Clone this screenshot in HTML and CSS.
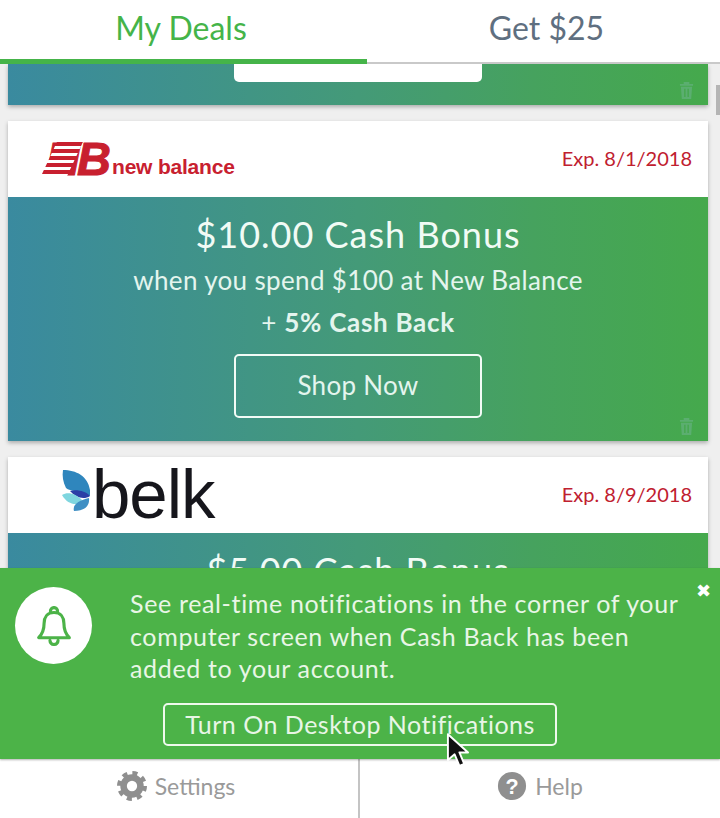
FILE: index.html
```html
<!DOCTYPE html>
<html lang="en">
<head>
    <meta charset="UTF-8">
    <title>My Deals</title>
    <link rel="stylesheet" href="styles.css">
</head>
<body>
    <!-- Tabs -->
    <nav class="tabs">
        <div class="tab active">My Deals</div>
        <div class="tab">Get $25</div>
    </nav>

    <main class="deals">
        <section class="card card-stub">
            <div class="card-body stub-body">
                <div class="stub-button"></div>
                <svg class="trash" viewBox="0 0 16 20"><path d="M1 3h14v2H1zM5 1h6v2H5zM2 6h12l-1 13H3zM5.500 8v9h1.500V8zM9 8v9h1.500V8z" fill-rule="evenodd"/></svg>
            </div>
        </section>

        <section class="card">
            <header class="card-head">
                <div class="logo-nb">
                    <span class="nb-mark">NB</span>
                    <span class="nb-stripes"></span>
                    <span class="nb-name">new balance</span>
                </div>
                <span class="expires">Exp. 8/1/2018</span>
            </header>
            <div class="card-body">
                <h2>$10.00 Cash Bonus</h2>
                <p>when you spend $100 at New Balance</p>
                <p class="plus">+ <b>5% Cash Back</b></p>
                <a class="shop-btn">Shop Now</a>
                <svg class="trash" viewBox="0 0 16 20"><path d="M1 3h14v2H1zM5 1h6v2H5zM2 6h12l-1 13H3zM5.500 8v9h1.500V8zM9 8v9h1.500V8z" fill-rule="evenodd"/></svg>
            </div>
        </section>

        <section class="card">
            <header class="card-head">
                <div class="logo-belk">
                    <svg class="belk-wing" viewBox="0 0 28 42">
                        <path d="M1 0C14 0 26 6 28 20v6C18 20 8 22 4 18 1 12 0 6 1 0z" fill="#2f86bd"/>
                        <path d="M8 21c6-2 16 0 20 5-6 4-14 2-20-5z" fill="#2b3fa6"/>
                        <path d="M0 25c6-4 14-1 20 5-2 6-14 6-20-5z" fill="#7fd6df"/>
                        <path d="M12 41c-2-7 6-11 15-13 1 8-5 13-15 13z" fill="#3f8fc4"/>
                    </svg>
                    <span class="belk-name">belk</span>
                </div>
                <span class="expires">Exp. 8/9/2018</span>
            </header>
            <div class="card-body">
                <h2>$5.00 Cash Bonus</h2>
            </div>
        </section>

        <div class="scrollbar"></div>
    </main>

    <!-- Notifications prompt -->
    <section class="promo">
        <div class="bell-circle">
            <svg viewBox="0 0 40 44" fill="none" stroke="#4cb348" stroke-width="3.500" stroke-linejoin="round" stroke-linecap="round">
                <path d="M20 7c-7.500 0-11 5.500-11 12 0 8-2 12-6 16h34c-4-4-6-8-6-16 0-6.500-3.500-12-11-12z"/>
                <path d="M16 5.500a4 4 0 0 1 8 0"/>
                <path d="M15.500 38a4.500 4.500 0 0 0 9 0"/>
            </svg>
        </div>
        <div class="promo-main">
            <p class="promo-text">See real-time notifications in the corner of your computer screen when Cash Back has been added to your account.</p>
            <a class="promo-btn">Turn On Desktop Notifications</a>
        </div>
        <span class="close">&#10006;</span>
        <svg class="cursor" viewBox="0 0 24 36">
            <path d="M2 1v27l7-6 5 12 5-2-5-12h9z" fill="#111" stroke="#fff" stroke-width="2" stroke-linejoin="round"/>
        </svg>
    </section>

    <footer class="bottom">
        <div class="bottom-item">
            <svg viewBox="0 0 32 32" fill="none" stroke="#8f8f8f">
                <circle cx="16" cy="16" r="9" stroke-width="7"/>
                <circle cx="16" cy="16" r="13.500" stroke-width="5" stroke-dasharray="5.300 5.300"/>
            </svg>
            <span>Settings</span>
        </div>
        <div class="bottom-item">
            <svg viewBox="0 0 32 32"><circle cx="16" cy="16" r="15" fill="#8f8f8f"/><text class="help-mark" x="16" y="24" text-anchor="middle">?</text></svg>
            <span>Help</span>
        </div>
    </footer>
</body>
</html>
```

FILE: styles.css
```css
* {
    box-sizing: border-box;
}

html, body {
    margin: 0;
    height: 100%;
}

body {
    font-family: 'Lato', 'Open Sans', sans-serif;
    display: flex;
    flex-direction: column;
    height: 818px;
    overflow: hidden;
    background: #efefef;
    color: #fff;
}

/* Tabs */
.tabs {
    display: flex;
    height: 64px;
    flex: none;
    background: #fff;
    border-bottom: 2px solid #c9c9c9;
}

.tab {
    flex: none;
    width: 353px;
    height: 62px;
    padding-left: 6px;
    text-align: center;
    font-size: 32px;
    line-height: 55px;
    color: #5f6f80;
}

.tab.active {
    width: 367px;
    height: 64px;
    padding: 0 5px 0 0;
    color: #45b449;
    border-bottom: 5px solid #45b449;
}

/* Cards */
.deals {
    flex: 1;
    min-height: 0;
    overflow: hidden;
    position: relative;
    padding: 0 12px 0 8px;
    display: flex;
    flex-direction: column;
    gap: 16px;
}

.card {
    flex: none;
    background: #fff;
    box-shadow: 0 2px 4px rgba(0, 0, 0, 0.28);
}

.card-head {
    height: 76px;
    display: flex;
    align-items: center;
    justify-content: space-between;
    padding: 0 16px 0 34px;
}

.expires {
    font-size: 20px;
    color: #c0202f;
    margin-top: -2px;
}

.card-body {
    position: relative;
    height: 244px;
    padding-top: 13px;
    text-align: center;
    background: linear-gradient(to right, #3a8a9f, #449a78 50%, #46a25e 75%, #45a94c);
}

.card-body h2 {
    margin: 0;
    font-size: 36px;
    font-weight: 400;
    line-height: 48px;
    letter-spacing: 1px;
    color: #f1fbf5;
}

.card-body p {
    margin: 0;
    padding-top: 2px;
    font-size: 26px;
    line-height: 40px;
    letter-spacing: 0.35px;
    color: #e4f5ee;
}

.card-body .plus {
    letter-spacing: 0.7px;
}

.shop-btn {
    display: block;
    width: 248px;
    height: 64px;
    margin: 12px auto 0;
    border: 2px solid #f2fbf6;
    border-radius: 5px;
    font-size: 26px;
    line-height: 58px;
    letter-spacing: 0.3px;
    color: #e4f5ee;
}

.trash {
    position: absolute;
    right: 14px;
    bottom: 5px;
    width: 15px;
    height: 19px;
    fill: #5bae70;
}

/* First card is scrolled almost out of view */
.card-stub .stub-body {
    height: 41px;
    padding: 0;
}

.stub-button {
    width: 248px;
    height: 18px;
    margin: 0 auto;
    background: #fff;
    border-radius: 0 0 5px 5px;
}

.scrollbar {
    position: absolute;
    top: 21px;
    right: 0;
    width: 4px;
    height: 30px;
    background: #b5b5b5;
}

/* New Balance logo */
.logo-nb {
    position: relative;
    width: 192px;
    height: 36px;
    white-space: nowrap;
}

.nb-mark {
    position: absolute;
    left: 4px;
    top: -9px;
    font-family: 'Liberation Sans', sans-serif;
    font-size: 47px;
    font-weight: 700;
    font-style: italic;
    letter-spacing: -3px;
    line-height: 54px;
    color: #c8202f;
    -webkit-text-stroke: 1px #c8202f;
}

.nb-stripes {
    position: absolute;
    left: 7px;
    top: 1px;
    width: 26px;
    height: 34px;
    background: repeating-linear-gradient(to bottom, #c8202f 0 4px, #fff 4px 7px);
    transform: skewX(-25deg);
}

.nb-name {
    position: absolute;
    left: 70px;
    top: 13px;
    font-family: 'Liberation Sans', sans-serif;
    font-size: 21px;
    font-weight: 700;
    letter-spacing: -0.2px;
    line-height: 26px;
    color: #c8202f;
}

/* Belk logo */
.logo-belk {
    display: flex;
    align-items: center;
    margin-left: 20px;
}

.belk-wing {
    width: 28px;
    height: 42px;
    margin-top: -8px;
}

.belk-name {
    font-family: 'Liberation Sans', sans-serif;
    font-size: 69px;
    line-height: 60px;
    letter-spacing: -1px;
    color: #16161c;
    margin: -1px 0 0 2px;
}

/* Notifications prompt */
.promo {
    position: relative;
    flex: none;
    height: 191px;
    display: flex;
    padding: 19px 0 0 15px;
    background: #4cb348;
    box-shadow: 0 1px 2px rgba(0, 0, 0, 0.3);
    z-index: 1;
}

.bell-circle {
    width: 77px;
    height: 77px;
    flex: none;
    border-radius: 50%;
    background: #fff;
    display: flex;
    align-items: center;
    justify-content: center;
}

.bell-circle svg {
    width: 36px;
    height: 40px;
}

.promo-main {
    margin-left: 38px;
    width: 560px;
}

.promo-text {
    margin: 0;
    font-size: 25px;
    line-height: 32.500px;
    color: #e8f6e6;
    letter-spacing: 0.65px;
}

.promo-btn {
    display: block;
    width: 394px;
    height: 43px;
    margin: 18px 0 0 33px;
    border: 2px solid #eef9ec;
    border-radius: 5px;
    text-align: center;
    font-size: 25px;
    line-height: 38px;
    letter-spacing: 0.5px;
    color: #e8f6e6;
}

.close {
    position: absolute;
    top: 11px;
    right: 9px;
    font-family: 'DejaVu Sans', sans-serif;
    font-size: 18px;
    line-height: 24px;
    color: #fff;
}

.cursor {
    position: absolute;
    left: 446px;
    top: 165px;
    width: 23px;
    height: 35px;
    z-index: 2;
}

/* Bottom bar */
.bottom {
    flex: none;
    height: 59px;
    display: flex;
    background: #fff;
}

.bottom-item {
    flex: 1;
    display: flex;
    align-items: center;
    justify-content: center;
    gap: 8px;
    font-size: 23px;
    color: #9a9a9a;
    padding-bottom: 6px;
}

.bottom-item:first-child {
    flex: none;
    width: 360px;
    border-right: 2px solid #c4c4c4;
    padding-right: 6px;
}

.bottom-item svg {
    width: 30px;
    height: 30px;
}

.help-mark {
    font-family: 'Liberation Sans', sans-serif;
    font-size: 23px;
    font-weight: 700;
    fill: #fff;
}
```
